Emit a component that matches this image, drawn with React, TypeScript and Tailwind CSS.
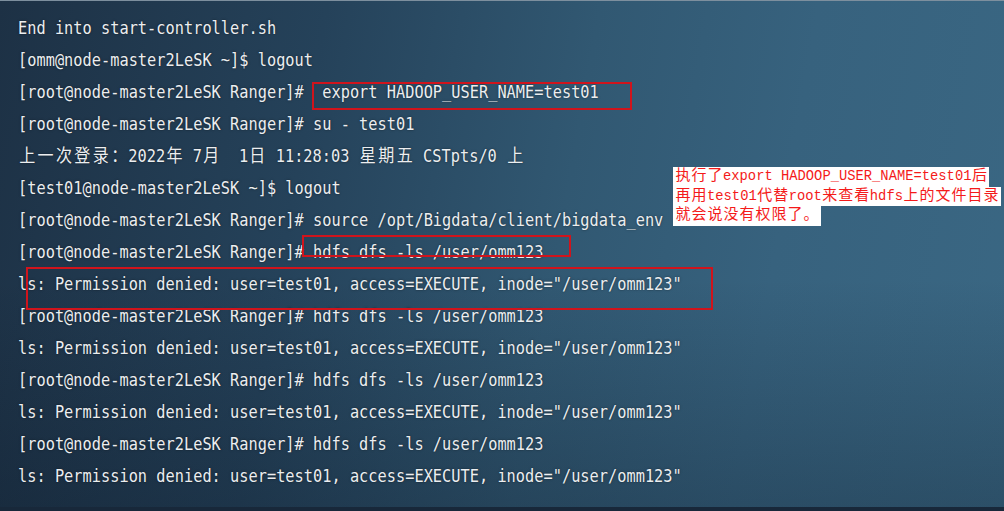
const prompt = "[root@node-master2LeSK Ranger]# ";
const denied = 'ls: Permission denied: user=test01, access=EXECUTE, inode="/user/omm123"';

const lines = [
  "End into start-controller.sh",
  "[omm@node-master2LeSK ~]$ logout",
  prompt + " export HADOOP_USER_NAME=test01",
  prompt + "su - test01",
  "上一次登录：2022年 7月  1日 11:28:03 星期五 CSTpts/0 上",
  "[test01@node-master2LeSK ~]$ logout",
  prompt + "source /opt/Bigdata/client/bigdata_env",
  prompt + "hdfs dfs -ls /user/omm123",
  denied,
  prompt + "hdfs dfs -ls /user/omm123",
  denied,
  prompt + "hdfs dfs -ls /user/omm123",
  denied,
  prompt + "hdfs dfs -ls /user/omm123",
  denied,
];

const isWide = (c: string) => /[\u3000-\u9fff\uff00-\uffef]/.test(c);

// terminal grid: CJK glyphs take two cells
function Cells({ text, wide }: { text: string; wide: string }) {
  return (
    <>
      {Array.from(text).map((c, i) =>
        isWide(c) ? (
          <span key={i} className={wide}>
            {c}
          </span>
        ) : (
          c
        )
      )}
    </>
  );
}

function Note({ text }: { text: string }) {
  return (
    <div className="w-fit bg-white px-[2px] leading-[19.5px] whitespace-pre">
      <Cells text={text} wide="inline-block w-[16px] text-center text-[15px]" />
    </div>
  );
}

export default function App() {
  return (
    <div className="relative w-[1004px] h-[511px] overflow-hidden border-t border-[#7d8f9e] border-b-[4px] border-b-[#18283a] bg-[linear-gradient(to_bottom,rgba(8,18,32,0)_55%,rgba(8,18,32,0.28)),linear-gradient(100deg,#1d3145_0%,#25425a_30%,#315872_55%,#37627e_75%,#3a6783_100%)] bg-[#2b4c65]">
      <div className="flex flex-col pt-[11px] pl-[18px] font-['DejaVu_Sans_Mono','Noto_Sans_CJK_SC',monospace] text-[15.3px] leading-[32px] text-[#eceef0] [text-shadow:0_0_2px_rgba(0,0,0,0.55)]">
        {lines.map((l, i) => (
          <div key={i} className="whitespace-pre scale-y-[1.12]">
            <Cells text={l} wide="inline-block w-[18.4px] text-center text-[16px]" />
          </div>
        ))}
      </div>

      {/* red annotation boxes */}
      <div className="absolute left-[312px] top-[81px] w-[320px] h-[28px] border-2 border-[#d0141c]" />
      <div className="absolute left-[302px] top-[234px] w-[269px] h-[22px] border-2 border-[#d0141c]" />
      <div className="absolute left-[26px] top-[266px] w-[687px] h-[43px] border-2 border-[#d0141c]" />

      <div className="absolute left-[673px] top-[166px] flex flex-col font-['Liberation_Mono','Noto_Sans_CJK_SC',monospace] text-[13.8px] text-[#f41a1a]">
        <Note text="执行了export HADOOP_USER_NAME=test01后" />
        <Note text="再用test01代替root来查看hdfs上的文件目录" />
        <Note text="就会说没有权限了。" />
      </div>
    </div>
  );
}
